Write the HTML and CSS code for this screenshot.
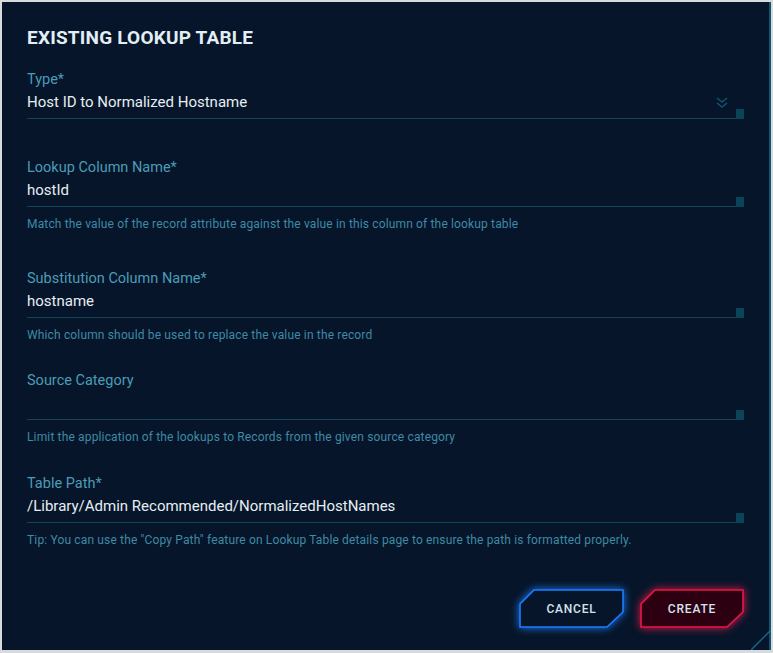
FILE: index.html
```
<!DOCTYPE html>
<html lang="en">
<head>
    <meta charset="UTF-8">
    <meta name="viewport" content="width=device-width, initial-scale=1.0">
    <title>Existing Lookup Table</title>
    <link rel="stylesheet" href="styles.css">
</head>
<body>

    <div class="panel">
        <h2 class="panel-title">EXISTING LOOKUP TABLE</h2>

        <!-- Type select -->
        <div class="field field-type">
            <div class="field-label">Type*</div>
            <div class="field-row">
                <div class="field-value">
                    <span>Host ID to Normalized Hostname</span>
                    <svg class="chevron" width="12" height="12" viewBox="0 0 12 12">
                        <polyline points="1,1 6,5 11,1" fill="none" stroke="#0f5570" stroke-width="1.6"/>
                        <polyline points="1,6 6,10 11,6" fill="none" stroke="#0f5570" stroke-width="1.6"/>
                    </svg>
                </div>
                <div class="notch"></div>
            </div>
        </div>

        <div class="field field-lookup">
            <div class="field-label">Lookup Column Name*</div>
            <div class="field-row">
                <div class="field-value">hostId</div>
                <div class="notch"></div>
            </div>
            <div class="field-help">Match the value of the record attribute against the value in this column of the lookup table</div>
        </div>

        <div class="field field-subst">
            <div class="field-label">Substitution Column Name*</div>
            <div class="field-row">
                <div class="field-value">hostname</div>
                <div class="notch"></div>
            </div>
            <div class="field-help">Which column should be used to replace the value in the record</div>
        </div>

        <div class="field field-source">
            <div class="field-label">Source Category</div>
            <div class="field-row">
                <div class="field-value"></div>
                <div class="notch"></div>
            </div>
            <div class="field-help">Limit the application of the lookups to Records from the given source category</div>
        </div>

        <div class="field field-path">
            <div class="field-label">Table Path*</div>
            <div class="field-row">
                <div class="field-value">/Library/Admin Recommended/NormalizedHostNames</div>
                <div class="notch"></div>
            </div>
            <div class="field-help">Tip: You can use the "Copy Path" feature on Lookup Table details page to ensure the path is formatted properly.</div>
        </div>

        <div class="actions">
            <button class="btn btn-cancel">
                <svg class="btn-shape" width="105" height="39" viewBox="0 0 105 39">
                    <polygon points="1,15 15,1 104,1 104,23 88,38 1,38"/>
                </svg>
                <span>CANCEL</span>
            </button>
            <button class="btn btn-create">
                <svg class="btn-shape" width="104" height="39" viewBox="0 0 104 39">
                    <polygon points="1,15 15,1 103,1 103,23 87,38 1,38"/>
                </svg>
                <span>CREATE</span>
            </button>
        </div>

        <!-- cut corner line -->
        <svg class="corner" width="20" height="20" viewBox="0 0 20 20">
            <line x1="0" y1="20" x2="20" y2="0" stroke="#0e6a86" stroke-width="1.5"/>
        </svg>
    </div>

</body>
</html>
```

FILE: styles.css
```
body {
    margin: 0;
    padding: 2px 2px 3px 2px;
    background-color: #d9dadc;
    font-family: "Roboto", "Liberation Sans", sans-serif;
}

.panel {
    position: relative;
    height: 648px;
    box-sizing: border-box;
    padding: 24px 25px 0 25px;
    background-color: #061529; /* deep navy */
    border-right: 2px solid #0e5670;
}

.panel-title {
    margin: 0;
    font-size: 19px;
    line-height: 24px;
    font-weight: 700;
    color: #e2eef5;
    letter-spacing: 0.2px;
}

/* spacing between the form groups isn't even in the design */
.field-type {
    margin-top: 20px;
}

.field-lookup {
    margin-top: 39px;
}

.field-subst {
    margin-top: 37px;
}

.field-source {
    margin-top: 28px;
}

.field-path {
    margin-top: 29px;
}

.field-label {
    font-size: 14.5px;
    line-height: 20px;
    color: #4b9cb7; /* teal */
}

.field-row {
    display: flex;
    align-items: flex-end;
}

.field-value {
    flex: 1;
    display: flex;
    justify-content: space-between;
    align-items: center;
    height: 24px;
    padding-bottom: 4px;
    border-bottom: 1px solid #0f4559;
    font-size: 15px;
    line-height: 24px;
    color: #e6eef3;
}

.chevron {
    margin-right: 8px;
    margin-top: 1px;
}

.notch {
    width: 8px;
    height: 10px;
    background-color: #0c4457;
}

.field-help {
    margin-top: 9px;
    font-size: 12px;
    line-height: 16px;
    letter-spacing: 0.15px;
    color: #3f8aa5;
}

.actions {
    display: flex;
    justify-content: flex-end;
    gap: 16px;
    margin-top: 41px;
}

.btn {
    position: relative;
    width: 105px;
    height: 39px;
    padding: 0;
    background: none;
    border: none;
    cursor: pointer;
    font-family: "Roboto", "Liberation Sans", sans-serif;
    font-size: 12px;
    font-weight: 500;
    letter-spacing: 0.8px;
    color: #d6e2ec;
}

.btn-create {
    width: 104px;
}

.btn span {
    position: relative;
}

.btn-shape {
    position: absolute;
    left: 0;
    top: 0;
}

.btn-cancel .btn-shape polygon {
    fill: #061529;
    stroke: #1b7dff; /* electric blue */
    stroke-width: 1.6;
}

.btn-cancel .btn-shape {
    filter: drop-shadow(0 0 4px #1b7dff);
}

.btn-create .btn-shape polygon {
    fill: #2c0011;
    stroke: #e8164a; /* hot red */
    stroke-width: 1.6;
}

.btn-create .btn-shape {
    filter: drop-shadow(0 0 4px #e8164a);
}

.corner {
    position: absolute;
    right: -2px;
    bottom: 0;
}
```
